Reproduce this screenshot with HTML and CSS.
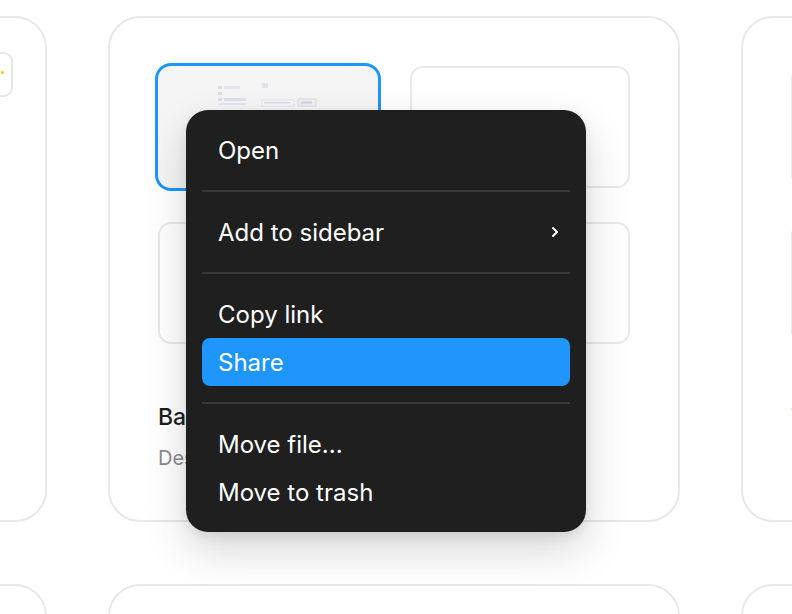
FILE: index.html
```html
<!DOCTYPE html>
<html lang="en">
<head>
<meta charset="utf-8">
<title>Files</title>
<link rel="stylesheet" href="styles.css">
</head>
<body>
<div class="page">
  <div class="grid">
    <div class="card card-edge">
      <div class="pill"><span class="spark"></span></div>
    </div>
    <div class="card">
      <div class="thumbs">
        <div class="thumb selected">
          <svg class="wire" width="120" height="40" viewBox="0 0 120 40">
            <rect x="12" y="10" width="4" height="3" fill="#dcdce4"/>
            <rect x="18" y="10" width="16" height="3" fill="#e4e4ec"/>
            <rect x="12" y="16" width="4" height="3" fill="#dcdce4"/>
            <rect x="12" y="22" width="4" height="3" fill="#dcdce4"/>
            <rect x="18" y="22" width="22" height="3" fill="#dfdfe8"/>
            <rect x="12" y="27" width="28" height="2" fill="#e6e6ee"/>
            <rect x="56" y="7" width="6" height="5" fill="#e2e2e8"/>
            <rect x="56" y="24" width="32" height="6" fill="#f8f8fa" stroke="#e4e4ec" stroke-width="1"/>
            <rect x="58" y="26" width="26" height="1.5" fill="#d9d9e2"/>
            <rect x="92" y="23" width="18" height="7" fill="#efeff4" stroke="#dbdbe4" stroke-width="1"/>
            <rect x="95" y="25.5" width="11" height="2" fill="#d4d4de"/>
          </svg>
        </div>
        <div class="thumb"></div>
        <div class="thumb"></div>
        <div class="thumb"></div>
      </div>
      <div class="title">Basic wireframes</div>
      <div class="sub">Design file</div>
    </div>
    <div class="card">
      <div class="thumbs">
        <div class="thumb"></div>
        <div class="thumb"></div>
        <div class="thumb"></div>
        <div class="thumb"></div>
      </div>
      <div class="title">Team library</div>
      <div class="sub">Design file</div>
    </div>
    <div class="card"></div>
    <div class="card"></div>
    <div class="card"></div>
  </div>

  <div class="menu">
    <div class="item">Open</div>
    <div class="sep"></div>
    <div class="item">Add to sidebar
      <svg class="chev" width="10" height="12" viewBox="0 0 10 12"><path d="M3 2 L7 6 L3 10" fill="none" stroke="#ffffff" stroke-width="2" stroke-linecap="round" stroke-linejoin="round"/></svg>
    </div>
    <div class="sep"></div>
    <div class="item">Copy link</div>
    <div class="item active">Share</div>
    <div class="sep"></div>
    <div class="item">Move file...</div>
    <div class="item">Move to trash</div>
  </div>
</div>
</body>
</html>
```

FILE: styles.css
```css
html, body {
  margin: 0;
  padding: 0;
  background: #ffffff;
}
body {
  font-family: Inter, "Noto Sans", "Liberation Sans", sans-serif;
}
.page {
  position: relative;
  width: 792px;
  height: 614px;
  overflow: hidden;
}
.grid {
  display: grid;
  grid-template-columns: 572px 572px 572px;
  grid-auto-rows: 506px;
  column-gap: 61px;
  row-gap: 62px;
  margin-left: -525px;
  padding-top: 16px;
}
.card {
  box-sizing: border-box;
  border: 2px solid #e8e8e8;
  border-radius: 32px;
  padding: 48px;
  background: #ffffff;
}
.card-edge {
  display: flex;
  justify-content: flex-end;
  align-items: flex-start;
  padding: 34px 32px 0 0;
}
.pill {
  position: relative;
  width: 64px;
  height: 45px;
  box-sizing: border-box;
  border: 2px solid #e6e6e6;
  border-radius: 9px;
}
.spark {
  position: absolute;
  left: 50px;
  top: 17px;
  width: 3px;
  height: 3px;
  border-radius: 50%;
  background: #f5c518;
}
.thumbs {
  display: grid;
  grid-template-columns: 220px 220px;
  grid-auto-rows: 122px;
  column-gap: 32px;
  row-gap: 34px;
}
.thumb {
  box-sizing: border-box;
  border: 2px solid #e9e9e9;
  border-radius: 13px;
  background: #ffffff;
}
.thumb.selected {
  border: none;
  background: #f5f5f6;
  box-shadow: 0 0 0 3px #1e96fc;
  display: flex;
  align-items: flex-start;
  justify-content: flex-start;
  padding: 10px 0 0 48px;
}
.wire {
  display: block;
}
.title {
  margin-top: 59px;
  font-size: 23px;
  font-weight: 500;
  color: #1d1d1d;
  line-height: 28px;
}
.sub {
  margin-top: 15px;
  font-size: 20px;
  color: #8c8c8c;
  line-height: 24px;
}
.menu {
  position: absolute;
  left: 186px;
  top: 110px;
  width: 400px;
  box-sizing: border-box;
  padding: 16px;
  background: #1f1f1f;
  border-radius: 22px;
  box-shadow: 0 18px 44px rgba(0, 0, 0, 0.16), 0 4px 12px rgba(0, 0, 0, 0.08);
}
.item {
  display: flex;
  align-items: center;
  justify-content: space-between;
  height: 48px;
  padding: 0 10px 0 16px;
  border-radius: 8px;
  color: #ffffff;
  font-size: 24px;
  font-weight: 400;
}
.item.active {
  background: #1e96fc;
}
.chev {
  display: block;
}
.sep {
  height: 2px;
  background: #383838;
  margin: 16px 0;
}
```
